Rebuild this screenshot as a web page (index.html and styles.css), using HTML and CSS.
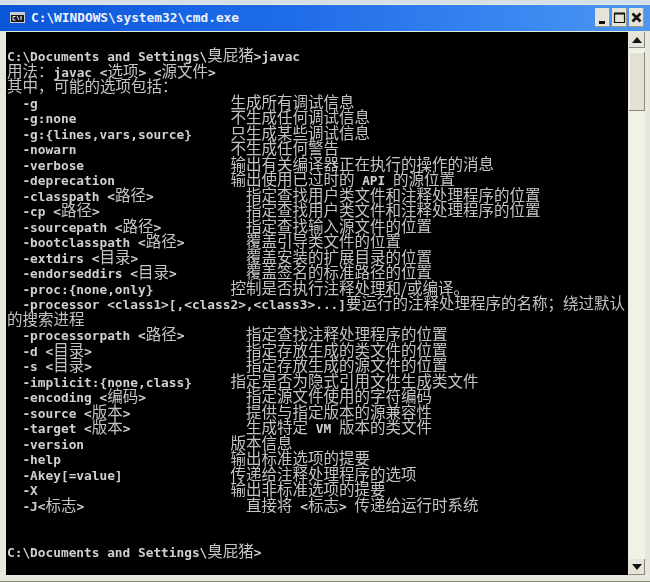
FILE: index.html
```html
<!DOCTYPE html>
<html lang="zh">
<head>
<meta charset="utf-8">
<title>cmd.exe</title>
<link rel="stylesheet" href="styles.css">
</head>
<body>
<div class="window">
  <header class="titlebar">
    <svg class="app-icon" width="15" height="11" viewBox="0 0 15 11"><rect width="15" height="11" fill="#c9cdd4"/><rect x="1" y="3" width="13" height="7" fill="#1a1a1a"/><path d="M3 4.5H5.5M3 4.5V8H5.5M7 4L9 8M10 5H12M11 5V8" stroke="#eee" fill="none"/></svg>
    <span class="title">C:\WINDOWS\system32\cmd.exe</span>
    <div class="controls">
      <button class="ctl"><svg width="15" height="19" viewBox="0 0 15 19"><rect x="4" y="13" width="6" height="3" fill="#111"/></svg></button>
      <button class="ctl"><svg width="15" height="19" viewBox="0 0 15 19"><path d="M2.5 5.5H12.5V14.5H2.5Z" fill="none" stroke="#111" stroke-width="1.2"/><rect x="2" y="4.5" width="11" height="2" fill="#111"/></svg></button>
      <button class="ctl"><svg width="15" height="19" viewBox="0 0 15 19"><path d="M3.5 5.5L11.5 13.5M11.5 5.5L3.5 13.5" stroke="#111" stroke-width="2.6"/></svg></button>
    </div>
  </header>
  <div class="client">
    <div class="console">
      <div>C:\Documents and Settings\<i>臭屁猪</i>&gt;javac</div>
      <div><i>用法：</i>javac &lt;<i>选项</i>&gt; &lt;<i>源文件</i>&gt;</div>
      <div><i>其中，可能的选项包括：</i></div>
      <div>  -g                         <i>生成所有调试信息</i></div>
      <div>  -g:none                    <i>不生成任何调试信息</i></div>
      <div>  -g:{lines,vars,source}     <i>只生成某些调试信息</i></div>
      <div>  -nowarn                    <i>不生成任何警告</i></div>
      <div>  -verbose                   <i>输出有关编译器正在执行的操作的消息</i></div>
      <div>  -deprecation               <i>输出使用已过时的</i> API <i>的源位置</i></div>
      <div>  -classpath &lt;<i>路径</i>&gt;            <i>指定查找用户类文件和注释处理程序的位置</i></div>
      <div>  -cp &lt;<i>路径</i>&gt;                   <i>指定查找用户类文件和注释处理程序的位置</i></div>
      <div>  -sourcepath &lt;<i>路径</i>&gt;           <i>指定查找输入源文件的位置</i></div>
      <div>  -bootclasspath &lt;<i>路径</i>&gt;        <i>覆盖引导类文件的位置</i></div>
      <div>  -extdirs &lt;<i>目录</i>&gt;              <i>覆盖安装的扩展目录的位置</i></div>
      <div>  -endorseddirs &lt;<i>目录</i>&gt;         <i>覆盖签名的标准路径的位置</i></div>
      <div>  -proc:{none,only}          <i>控制是否执行注释处理和/或编译。</i></div>
      <div>  -processor &lt;class1&gt;[,&lt;class2&gt;,&lt;class3&gt;...]<i>要运行的注释处理程序的名称；绕过默认</i></div>
      <div><i>的搜索进程</i></div>
      <div>  -processorpath &lt;<i>路径</i>&gt;        <i>指定查找注释处理程序的位置</i></div>
      <div>  -d &lt;<i>目录</i>&gt;                    <i>指定存放生成的类文件的位置</i></div>
      <div>  -s &lt;<i>目录</i>&gt;                    <i>指定存放生成的源文件的位置</i></div>
      <div>  -implicit:{none,class}     <i>指定是否为隐式引用文件生成类文件</i></div>
      <div>  -encoding &lt;<i>编码</i>&gt;             <i>指定源文件使用的字符编码</i></div>
      <div>  -source &lt;<i>版本</i>&gt;               <i>提供与指定版本的源兼容性</i></div>
      <div>  -target &lt;<i>版本</i>&gt;               <i>生成特定</i> VM <i>版本的类文件</i></div>
      <div>  -version                   <i>版本信息</i></div>
      <div>  -help                      <i>输出标准选项的提要</i></div>
      <div>  -Akey[=value]              <i>传递给注释处理程序的选项</i></div>
      <div>  -X                         <i>输出非标准选项的提要</i></div>
      <div>  -J&lt;<i>标志</i>&gt;                     <i>直接将</i> &lt;<i>标志</i>&gt; <i>传递给运行时系统</i></div>
      <div> </div>
      <div> </div>
      <div>C:\Documents and Settings\<i>臭屁猪</i>&gt;</div>
    </div>
    <aside class="scrollbar">
      <div class="arrow"><svg width="10" height="6" viewBox="0 0 10 6"><path d="M5 0L10 6H0Z" fill="#111"/></svg></div>
      <div class="thumb"></div>
      <div class="track"></div>
      <div class="arrow"><svg width="10" height="6" viewBox="0 0 10 6"><path d="M0 0H10L5 6Z" fill="#111"/></svg></div>
    </aside>
  </div>
</div>
</body>
</html>
```
FILE: styles.css
```css
html, body { margin: 0; padding: 0; }
body { width: 650px; height: 582px; overflow: hidden; background: #e8e7dc; }
.window { width: 650px; height: 582px; display: flex; flex-direction: column; box-sizing: border-box; padding: 0 5px 6px 6px; background: #e8e7dc; border-top: 4px solid #d3e0ee; border-bottom: 1px solid #8d8f78; }
.titlebar { margin: 1px -5px 0 -6px; padding: 0 6px 2px 10px; height: 26px; flex: none; display: flex; align-items: center; gap: 6px; background: linear-gradient(90deg, #0a56d8 0%, #1f6ce8 45%, #3d8cf2 85%, #4f96ee 100%); box-sizing: border-box; }
.app-icon { flex: none; }
.title { flex: 1; font: bold 12.8px "DejaVu Sans Mono", monospace; color: #eef3ff; white-space: pre; }
.controls { display: flex; gap: 2px; }
.ctl { width: 15px; height: 19px; padding: 0; border: 0; background: #e6e4d8; box-shadow: inset -1px -1px 0 #9a9a90; display: block; }
.ctl svg { display: block; }
.client { flex: 1; display: flex; min-height: 0; margin-top: 1px; }
.console { flex: 1; background: #000; color: #d0d0d0; font: bold 12.8px/15.5px "DejaVu Sans Mono", monospace; padding: 15px 0 0 1px; overflow: hidden; filter: blur(0.3px); }
.console div { height: 15.5px; white-space: pre; }
.console i { font: normal 15.5px/15.5px "Noto Sans CJK SC", sans-serif; color: #c4c4c4; }
.scrollbar { width: 16px; flex: none; margin-left: 1px; display: flex; flex-direction: column; background: #f2f1e8; }
.arrow { height: 16px; flex: none; display: flex; align-items: center; justify-content: center; background: #e6e4d8; box-shadow: inset -1px -1px 0 #8a8a80; }
.thumb { height: 59px; flex: none; margin-top: 4px; background: #e3e1d4; box-shadow: inset -1px -1px 0 #8a8a80, inset 1px 1px 0 #f6f5ee; }
.track { flex: 1; }
```
